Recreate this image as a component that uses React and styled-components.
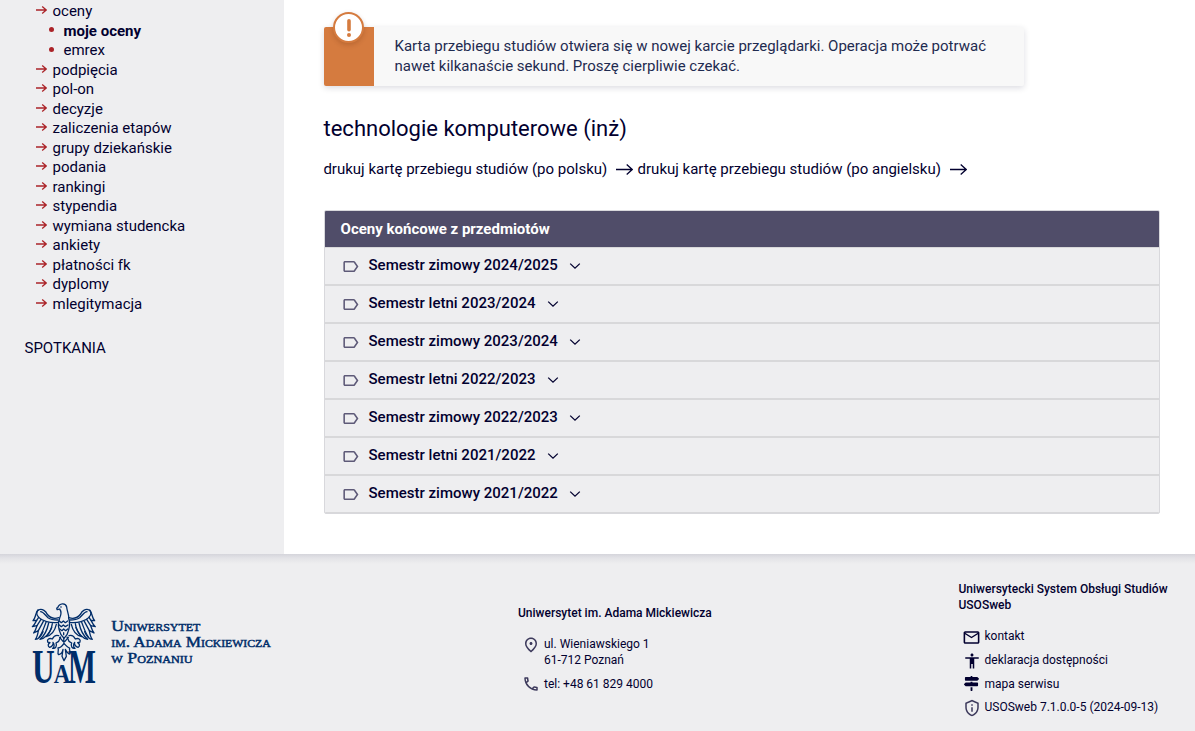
import React from 'react';
import styled, { createGlobalStyle } from 'styled-components';
import {
  MdLabelOutline,
  MdOutlinePlace,
  MdOutlineLocalPhone,
  MdOutlineEmail,
  MdAccessibility,
  MdOutlinePrivacyTip,
} from 'react-icons/md';
import { FaMapSigns } from 'react-icons/fa';

const GlobalStyle = createGlobalStyle`
  * { box-sizing: border-box; }
  html, body { margin: 0; background: #fff; overflow: hidden; }
  body {
    font-family: Roboto, "Liberation Sans", sans-serif;
    font-size: 15px;
    line-height: 19.5px;
    color: #02002f;
  }
  ul { list-style: none; margin: 0; padding: 0; }
  a { color: inherit; text-decoration: none; }
  svg { display: block; flex: none; }
`;

const Page = styled.div`
  height: 731px;
  display: flex;
  flex-direction: column;
  overflow: hidden;
`;

const Body = styled.div`
  display: flex;
  height: 554px;
`;

const Sidebar = styled.nav`
  width: 284px;
  padding: 2px 24px 0 24.5px;
  background: #eeeef0;
`;

const MenuItem = styled.li`
  display: flex;
  align-items: center;
  height: 19.53px;
  padding-left: ${(p) => (p.$sub ? '24.5px' : '11px')};
  gap: ${(p) => (p.$sub ? '9.5px' : '6px')};
  font-weight: ${(p) => (p.$active ? 700 : 400)};

  svg { margin-top: -3px; }
`;

const Bullet = styled.span`
  width: 5px;
  height: 5px;
  margin-top: -3px;
  border-radius: 50%;
  background: #ab2328;
`;

const MenuSection = styled.a`
  display: block;
  margin-top: 24.5px;
`;

const Main = styled.main`
  flex: 1;
  padding: 27px 35px 0 40px;
`;

const Alert = styled.div`
  position: relative;
  display: flex;
  width: 700px;
  height: 59px;
  border-radius: 2px;
  background: #f8f8f8;
  box-shadow: 0 2px 6px rgba(2, 0, 47, 0.14);
`;

const AlertStripe = styled.div`
  width: 50px;
  border-radius: 2px 0 0 2px;
  background: #d57b3f;
`;

const AlertBadge = styled.div`
  position: absolute;
  left: 9px;
  top: -15px;
  width: 31px;
  height: 31px;
  display: flex;
  align-items: center;
  justify-content: center;
  border: 2px solid #d57b3f;
  border-radius: 50%;
  background: #fff;
  box-shadow: 0 2px 5px rgba(80, 30, 0, 0.2);
`;

const AlertText = styled.p`
  flex: 1;
  margin: 0;
  padding: 9px 30px 0 20.5px;
  line-height: 20px;
  color: #1f2b50;
`;

const Title = styled.h2`
  margin: 29px 0 0 -0.5px;
  font-size: 22px;
  line-height: 28px;
  font-weight: 400;
`;

const PrintLinks = styled.div`
  display: flex;
  align-items: center;
  margin: 17px 0 0 -0.6px;
  height: 20px;

  a { display: flex; align-items: center; gap: 8.8px; margin-right: 4.5px; }
  svg { margin-top: -1px; }
`;

const Table = styled.section`
  margin-top: 30px;
  border: 1px solid #d8d8dc;
  border-radius: 2px;
  overflow: hidden;
  background: #eeeef0;
`;

const TableHead = styled.h3`
  margin: 0;
  height: 36px;
  padding: 0 15.6px;
  font-size: 15px;
  font-weight: 700;
  line-height: 36px;
  color: #fff;
  background: #504d69;
`;

const TermRow = styled.div`
  display: flex;
  align-items: center;
  height: 38px;
  padding: 0 0 1px 16px;
  border-bottom: 2px solid #d8d8da;
  font-weight: 500;
  letter-spacing: 0.01px;

  &:first-of-type { height: 39px; border-top: 1px solid #d8d8da; }
  &:last-child { border-bottom-width: 1px; height: 37px; }

  > svg:first-child { margin: 1px 8.5px 0 0; color: #5e5a78; }
  > svg:last-child { margin: 1px 0 0 11.5px; }
`;

const Footer = styled.footer`
  flex: 1;
  display: flex;
  background: linear-gradient(#d5d5db, #e3e3e7 4px, #eeeef0 10px);
  font-size: 12px;
  line-height: 16px;
`;

const LogoBox = styled.div`
  width: 518px;
  padding: 41px 0 0 20px;
`;

const FooterColumn = styled.div`
  width: ${(p) => p.$w};
  padding-top: ${(p) => p.$top};
`;

const FooterTitle = styled.div`
  font-weight: 500;
`;

const Contact = styled.div`
  display: flex;
  align-items: flex-start;
  margin-top: ${(p) => p.$mt || '8px'};
  padding-left: 4px;
`;

const IconSlot = styled.span`
  flex: none;
  display: flex;
  justify-content: center;
  width: 18px;
  height: 16px;
  margin: ${(p) => (p.$raised ? '-1px 4px 1px 0' : '0 4px 0 0')};
  color: ${(p) => (p.$soft ? '#3d3a5c' : '#02002f')};
`;

const Arrow = ({ w, h, color, stroke }) => (
  <svg width={w} height={h} viewBox={`0 0 ${w} ${h}`} fill="none" stroke={color} strokeWidth={stroke}>
    <path d={`M0 ${h / 2}H${w - 0.8}M${w - h / 2 - 0.8} 0.6L${w - 0.8} ${h / 2}L${w - h / 2 - 0.8} ${h - 0.6}`} />
  </svg>
);

const Chevron = () => (
  <svg width="12" height="8" viewBox="0 0 12 8" fill="none" stroke="#02002f" strokeWidth="1.3">
    <path d="M1.2 1.6L6 6.2L10.8 1.6" />
  </svg>
);

const Wing = () => (
  <g>
    <path d="M116 68C101 73 88 66 81 57C78 48 67 41 58 44C48 47 48 59 56 67C66 78 90 85 115 82" />
    <path d="M54 45C45 56 48 68 39 77L50 76C46 84 43 91 37 95L51 92C48 101 46 108 41 114L55 107C53 119 52 126 46 133C57 132 64 122 69 110" />
    <path d="M56 67L50 76M63 73L51 92M70 79L55 107M78 82C72 96 68 113 57 127M86 84C82 103 76 120 60 133C73 131 86 118 95 98" />
    <path d="M97 86C95 101 89 115 78 125C94 121 105 106 109 88" />
    <path d="M62 50C70 50 75 60 84 68C92 74 104 75 114 75" />
    <path d="M116 122C108 119 101 124 97 132C88 128 80 133 83 141L90 143C83 147 83 154 89 157C96 155 101 148 99 142C104 148 103 157 98 160C106 162 112 153 108 144L116 139L122 126" />
  </g>
);

const Logo = () => (
  <svg width="270" height="110" viewBox="0 0 810 330" fill="#002d69">
    <g fill="none" stroke="#002d69" strokeWidth="3.9" strokeLinejoin="round" strokeLinecap="round">
      <path d="M113 38C118 24 137 22 140 36C141 50 147 56 146 70C151 83 147 105 141 119L132 130L123 119C116 105 113 84 119 69C124 59 124 49 119 42L112 44C109 41 110 38 113 38Z" />
      <path d="M118 78L124 83L130 78L136 83L143 78M118 90L124 95L130 90L136 95L144 90M119 102L126 107L131 102L137 107L143 102M131 113L131 119" />
      <path d="M131 127L132 146M119 127L129 139M145 127L135 139M132 145C126 154 123 158 114 159C118 168 110 174 116 179C123 177 128 170 129 163L126 184L132 197L139 184L136 163C141 172 145 177 150 177C154 170 146 168 149 159C142 157 137 151 132 145Z" />
      <Wing />
      <g transform="translate(263 0) scale(-1 1)"><Wing /></g>
    </g>
    <circle cx="123" cy="36" r="2.5" />
    <g fontFamily="'Liberation Serif', serif" fontWeight="700">
      <text transform="translate(36 263) scale(.66 1)" fontSize="143">U</text>
      <text transform="translate(101 264) scale(.84 1)" fontSize="82">A</text>
      <text transform="translate(144 264) scale(.62 1)" fontSize="143">M</text>
    </g>
    <g
      fontFamily="'Liberation Serif', serif"
      fontSize="44"
      stroke="#002d69"
      strokeWidth="1.3"
      fontVariant="small-caps"
    >
      <text x="274" y="107" textLength="267" lengthAdjust="spacingAndGlyphs">Uniwersytet</text>
      <text x="274" y="156" textLength="478" lengthAdjust="spacingAndGlyphs">im. Adama Mickiewicza</text>
      <text x="274" y="204" textLength="244" lengthAdjust="spacingAndGlyphs">w Poznaniu</text>
    </g>
  </svg>
);

const MENU = [
  { label: 'oceny' },
  { label: 'moje oceny', sub: true, active: true },
  { label: 'emrex', sub: true },
  { label: 'podpięcia' },
  { label: 'pol-on' },
  { label: 'decyzje' },
  { label: 'zaliczenia etapów' },
  { label: 'grupy dziekańskie' },
  { label: 'podania' },
  { label: 'rankingi' },
  { label: 'stypendia' },
  { label: 'wymiana studencka' },
  { label: 'ankiety' },
  { label: 'płatności fk' },
  { label: 'dyplomy' },
  { label: 'mlegitymacja' },
];

const TERMS = [
  'Semestr zimowy 2024/2025',
  'Semestr letni 2023/2024',
  'Semestr zimowy 2023/2024',
  'Semestr letni 2022/2023',
  'Semestr zimowy 2022/2023',
  'Semestr letni 2021/2022',
  'Semestr zimowy 2021/2022',
];

export default function App() {
  return (
    <Page>
      <GlobalStyle />
      <Body>
        <Sidebar>
          <ul>
            {MENU.map((m) => (
              <MenuItem key={m.label} $sub={m.sub} $active={m.active}>
                {m.sub ? <Bullet /> : <Arrow w={11} h={8} color="#ab2328" stroke={1.3} />}
                <a href="#">{m.label}</a>
              </MenuItem>
            ))}
          </ul>
          <MenuSection href="#">SPOTKANIA</MenuSection>
        </Sidebar>
        <Main>
          <Alert>
            <AlertStripe />
            <AlertBadge>
              <svg width="6" height="18" viewBox="0 0 6 18" fill="#d57b3f">
                <rect x="1.2" y="0" width="3.6" height="12.5" rx="1.8" />
                <circle cx="3" cy="16" r="2" />
              </svg>
            </AlertBadge>
            <AlertText>
              Karta przebiegu studiów otwiera się w nowej karcie przeglądarki. Operacja może potrwać
              nawet kilkanaście sekund. Proszę cierpliwie czekać.
            </AlertText>
          </Alert>
          <Title>technologie komputerowe (inż)</Title>
          <PrintLinks>
            <a href="#">
              drukuj kartę przebiegu studiów (po polsku)
              <Arrow w={17} h={11} color="#02002f" stroke={1.3} />
            </a>
            <a href="#">
              drukuj kartę przebiegu studiów (po angielsku)
              <Arrow w={17} h={11} color="#02002f" stroke={1.3} />
            </a>
          </PrintLinks>
          <Table>
            <TableHead>Oceny końcowe z przedmiotów</TableHead>
            {TERMS.map((t) => (
              <TermRow key={t}>
                <MdLabelOutline size={19} />
                {t}
                <Chevron />
              </TermRow>
            ))}
          </Table>
        </Main>
      </Body>
      <Footer>
        <LogoBox><Logo /></LogoBox>
        <FooterColumn $w="440.5px" $top="51px">
          <FooterTitle>Uniwersytet im. Adama Mickiewicza</FooterTitle>
          <Contact $mt="15px">
            <IconSlot $soft><MdOutlinePlace size={18} /></IconSlot>
            <span>ul. Wieniawskiego 1<br />61-712 Poznań</span>
          </Contact>
          <Contact>
            <IconSlot $soft $raised><MdOutlineLocalPhone size={18} /></IconSlot>
            <span>tel: +48 61 829 4000</span>
          </Contact>
        </FooterColumn>
        <FooterColumn $w="236px" $top="27px">
          <FooterTitle>Uniwersytecki System Obsługi Studiów<br />USOSweb</FooterTitle>
          <Contact $mt="15px">
            <IconSlot><MdOutlineEmail size={19} /></IconSlot>
            <a href="#">kontakt</a>
          </Contact>
          <Contact>
            <IconSlot><MdAccessibility size={18} /></IconSlot>
            <a href="#">deklaracja dostępności</a>
          </Contact>
          <Contact>
            <IconSlot><FaMapSigns size={15} /></IconSlot>
            <a href="#">mapa serwisu</a>
          </Contact>
          <Contact $mt="7px">
            <IconSlot $soft><MdOutlinePrivacyTip size={18} /></IconSlot>
            <a href="#">USOSweb 7.1.0.0-5 (2024-09-13)</a>
          </Contact>
        </FooterColumn>
      </Footer>
    </Page>
  );
}
